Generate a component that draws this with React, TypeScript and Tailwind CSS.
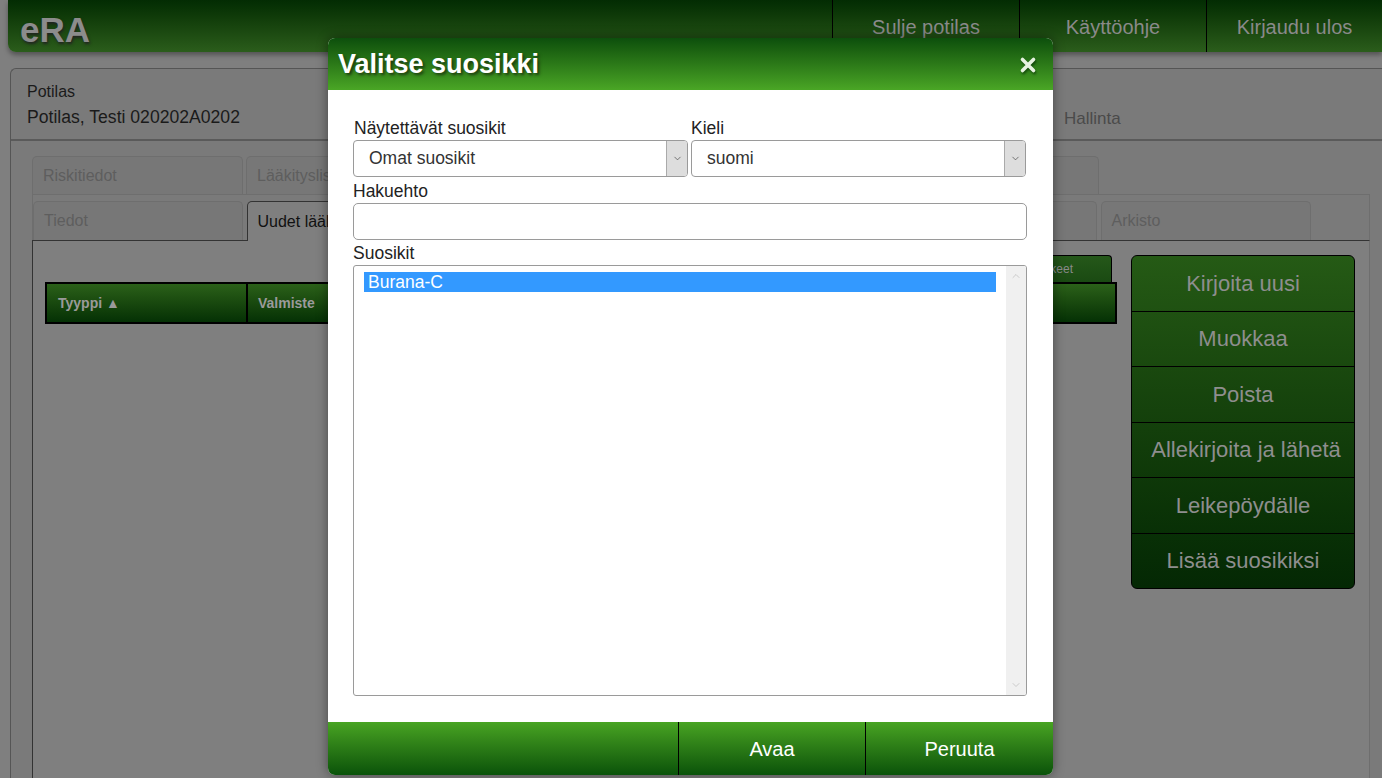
import { ChevronDown, ChevronUp } from 'lucide-react';

const topTabs = ['Riskitiedot', 'Lääkityslista', 'Reseptit', 'Hoitotiedot', 'Yhteenveto'];
const subTabs = ['Tiedot', 'Uudet lääkemääräykset', 'Voimassa olevat', 'Uusimispyynnöt', 'Tapahtumat', 'Arkisto'];
const actions = ['Kirjoita uusi', 'Muokkaa', 'Poista', '\u00a0Allekirjoita ja lähetä', 'Leikepöydälle', 'Lisää suosikiksi'];

function Select({ value }: { value: string }) {
  return (
    <div className="flex h-[37px] border border-[#9a9a9a] rounded-[4px] overflow-hidden bg-white">
      <div className="flex-1 flex items-center pl-[15px] text-[17.5px] text-[#333]">{value}</div>
      <div className="w-[21px] flex items-center justify-center bg-[#dddddd] border-l border-[#aaa]">
        <ChevronDown size={11} strokeWidth={1.5} className="text-[#444]" />
      </div>
    </div>
  );
}

export default function App() {
  return (
    <div className="relative w-[1382px] h-[778px] overflow-hidden bg-[#7f7f7f] font-['Liberation_Sans',Arial,sans-serif]">
      {/* Top bar */}
      <div className="ml-[8px] h-[52px] flex rounded-bl-[8px] bg-gradient-to-b from-[#032c03] to-[#2b5d1b] shadow-[0_3px_5px_rgba(0,0,0,0.35)]">
        <div className="flex-1 pl-[12px] pt-[4px] text-[35px] font-bold text-[#8c8c8c] [text-shadow:1px_2px_3px_#222]">eRA</div>
        {['Sulje potilas', 'Käyttöohje', 'Kirjaudu ulos'].map((t, i) => (
          <div
            key={t}
            className={`${i === 2 ? 'w-[176px]' : 'w-[187px]'} flex items-center justify-center pt-[2px] border-l border-black text-[20px] text-[#8a8a8a]`}
          >
            {t}
          </div>
        ))}
      </div>

      {/* Main panel */}
      <div className="mt-[16px] ml-[10px] h-[720px] border-l border-t border-[#555] rounded-tl-[6px] bg-[#7a7a7a]">
        <div className="h-[72px] flex border-b-2 border-[#5a5a5a]">
          <div className="pl-[16px] pt-[14px] w-[1000px]">
            <div className="text-[16px] leading-[18px] text-[#1a1a1a]">Potilas</div>
            <div className="mt-[5px] text-[17.6px] leading-[22px] text-[#1a1a1a]">Potilas, Testi 020202A0202</div>
          </div>
          <div className="pl-[53px] pt-[37px] text-[17px] text-[#4a4a4a]">Hallinta</div>
        </div>

        <div className="pt-[15px] pl-[21px] pr-[12px]">
          <div className="flex gap-[3px]">
            {topTabs.map((t) => (
              <div key={t} className="w-[211px] h-[38px] pl-[10px] flex items-center border border-b-0 border-[#6e6e6e] rounded-t-[5px] bg-[#777] text-[16px] text-[#5e5e5e]">
                {t}
              </div>
            ))}
          </div>
          <div className="border border-b-0 border-[#6e6e6e] pt-[6px] flex gap-[3.5px]">
            {subTabs.map((t, i) => (
              <div
                key={t}
                className={
                  i === 1
                    ? 'w-[210px] h-[40px] -mb-px pl-[10px] flex items-center border border-b-0 border-[#333] rounded-t-[5px] bg-[#7f7f7f] text-[16px] text-[#111] relative'
                    : 'w-[210px] h-[39px] pl-[10px] flex items-center border border-b-0 border-[#6e6e6e] rounded-t-[5px] bg-[#777] text-[16px] text-[#5e5e5e]'
                }
              >
                {t}
              </div>
            ))}
          </div>
          <div className="h-[600px] border-l border-t border-r border-[#333] border-r-[#6e6e6e] bg-[#7f7f7f] flex gap-[14px] pl-[12px] pt-[14px]">
            <div className="w-[1072px]">
              <div className="flex justify-end pr-[5px]">
                <div className="h-[27px] pr-[38px] pl-[120px] flex items-center rounded-t-[4px] border border-b-0 border-black bg-gradient-to-b from-[#25581a] to-[#1a4a12] text-[12px] text-[#8a8a8a]">
                  Näytä kaikki lääkkeet
                </div>
              </div>
              <div className="h-[42px] flex border-2 border-black bg-gradient-to-b from-[#2b6119] to-[#053105] text-[14px] font-bold text-[#9a9a9a]">
                <div className="w-[201px] pl-[11px] flex items-center border-r-2 border-black">Tyyppi ▲</div>
                <div className="w-[300px] pl-[10px] flex items-center border-r-2 border-black">Valmiste</div>
                <div className="flex-1" />
              </div>
            </div>
            <div className="w-[224px] h-[334px] flex flex-col rounded-[6px] border border-black overflow-hidden bg-gradient-to-b from-[#255a15] to-[#042804]">
              {actions.map((a, i) => (
                <div
                  key={a}
                  className={`flex-1 flex items-center justify-center text-[22px] text-[#8e8e8e] ${i > 0 ? 'border-t border-black' : ''}`}
                >
                  {a}
                </div>
              ))}
            </div>
          </div>
        </div>
      </div>

      {/* Dialog */}
      <div className="absolute left-[328px] top-[38px] w-[725px] h-[737px] flex flex-col rounded-[7px] bg-white overflow-hidden shadow-[0_0_12px_rgba(0,0,0,0.45)]">
        <div className="h-[52px] flex items-center justify-between pl-[10px] pr-[16px] bg-gradient-to-b from-[#0c4f0c] to-[#4aa625]">
          <div className="text-[27px] font-bold text-white [text-shadow:2px_2px_3px_#1d3a10]">Valitse suosikki</div>
          <svg width="18" height="18" viewBox="0 0 18 18" className="mt-[2px] drop-shadow-[1px_2px_1px_rgba(0,40,0,0.6)]">
            <path d="M3.5 3.5 L14.5 14.5 M14.5 3.5 L3.5 14.5" stroke="#e6f2e0" strokeWidth="3.6" strokeLinecap="round" />
          </svg>
        </div>

        <div className="flex-1 pl-[25px] pr-[26px] pt-[29px]">
          <div className="flex gap-[3px]">
            <div className="w-[335px]">
              <label className="block text-[17.5px] leading-[18px] mb-[3px] pl-px text-[#222]">Näytettävät suosikit</label>
              <Select value="Omat suosikit" />
            </div>
            <div className="w-[335px]">
              <label className="block text-[17.5px] leading-[18px] mb-[3px] text-[#222]">Kieli</label>
              <Select value="suomi" />
            </div>
          </div>
          <label className="block mt-[5px] text-[17.5px] leading-[18px] mb-[3px] text-[#222]">Hakuehto</label>
          <div className="h-[37px] border border-[#9a9a9a] rounded-[5px]" />
          <label className="block mt-[4px] text-[17.5px] leading-[18px] mb-[3px] text-[#222]">Suosikit</label>
          <div className="h-[431px] flex border border-[#9a9a9a] rounded-[3px] overflow-hidden">
            <div className="flex-1 pl-[10px] pr-[10px] pt-[6px]">
              <div className="h-[20px] pl-[4px] flex items-center bg-[#3399ff] text-[17.5px] text-white">Burana-C</div>
            </div>
            <div className="w-[20px] flex flex-col justify-between items-center bg-[#f0f0f0] py-[4px]">
              <ChevronUp size={12} strokeWidth={1.5} className="text-[#bdbdbd]" />
              <ChevronDown size={12} strokeWidth={1.5} className="text-[#bdbdbd]" />
            </div>
          </div>
        </div>

        <div className="h-[53px] flex bg-gradient-to-b from-[#48a423] to-[#09530a] text-[20px] text-white">
          <div className="w-[351px] border-r border-black" />
          <div className="w-[187px] flex items-center justify-center border-r border-black">Avaa</div>
          <div className="flex-1 flex items-center justify-center">Peruuta</div>
        </div>
      </div>
    </div>
  );
}
